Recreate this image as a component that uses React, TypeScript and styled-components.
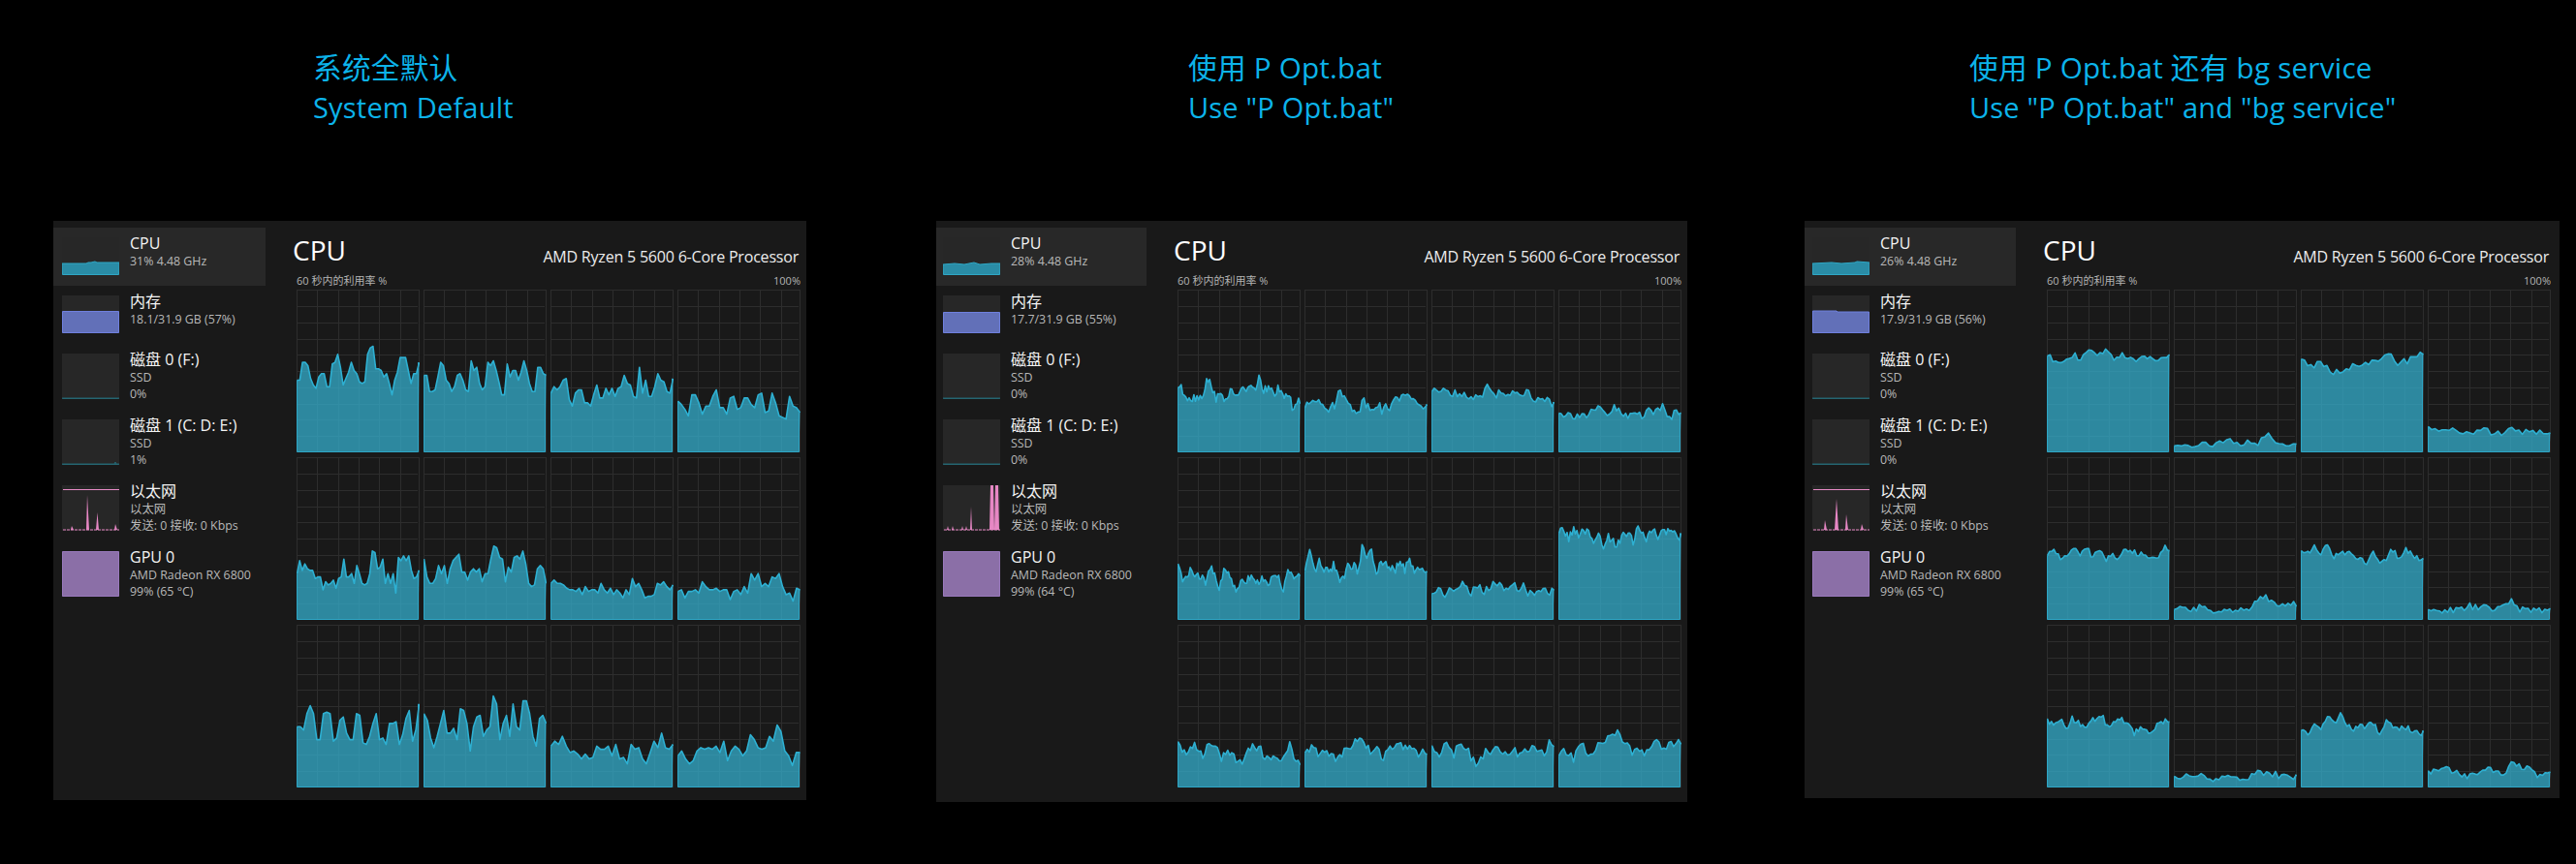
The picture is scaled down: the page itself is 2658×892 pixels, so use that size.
import React from "react";
import styled, { createGlobalStyle } from "styled-components";

const SANS = `"Open Sans", "Noto Sans CJK SC", sans-serif`;

const cpuSets: number[][][] = [
  [
    [44,44,55,55,53,45,41,39,46,48,48,40,40,54,55,60,52,41,45,49,55,50,48,43,42,43,60,64,65,51,51,50,46,48,42,35,44,49,58,58,58,50,42,48,48,55],
    [47,47,37,37,38,46,55,53,44,42,37,40,47,48,44,38,37,56,50,52,42,38,40,55,53,56,50,43,35,35,54,46,50,50,44,49,56,50,42,37,37,52,52,48,47],
    [36,40,38,40,44,45,32,28,36,38,38,30,30,28,35,41,33,33,39,35,39,34,39,40,47,42,41,34,33,52,36,44,34,34,40,48,44,43,37,36,45],
    [31,29,26,22,35,35,30,23,28,28,34,38,27,27,23,33,34,26,27,33,33,29,27,35,36,24,25,36,30,22,21,20,34,28,27,24],
    [28,36,30,34,31,30,30,25,26,26,18,23,21,22,24,19,25,26,37,26,26,28,22,33,28,22,21,22,28,42,41,31,32,37,22,28,22,28,16,38,36,39,36,39,30,25,26,30],
    [37,26,22,22,25,33,28,33,22,31,36,38,40,29,29,24,29,31,29,31,23,28,28,37,45,44,38,37,23,32,29,38,39,37,42,34,22,20,21,31,33,31,22],
    [22,24,22,22,21,19,18,18,17,19,15,20,17,18,18,16,22,18,16,19,15,18,16,13,18,15,25,20,22,18,13,14,14,15,22,21,23,20,18,21],
    [17,18,13,17,17,18,16,23,20,18,18,19,17,18,18,12,17,18,15,20,16,28,24,28,20,22,20,26,25,28,20,15,16,11,19,18],
    [37,37,35,45,50,45,29,29,45,46,45,28,30,41,43,33,29,29,45,44,27,26,31,39,45,29,30,26,39,39,40,26,32,42,47,28,35,51],
    [45,41,30,24,31,39,47,33,33,36,29,48,47,39,22,37,43,44,31,35,37,56,51,29,39,44,31,51,37,35,53,53,45,31,25,42,44,39],
    [25,28,26,31,25,21,22,20,17,20,17,18,25,23,23,25,19,26,17,18,14,26,23,24,17,14,21,28,24,33,24,23,26],
    [19,22,17,14,16,22,24,23,24,23,25,21,28,16,22,25,23,19,22,32,29,24,23,24,31,28,38,34,22,19,13,21,21],
  ],
  [
    [41,37,34,33,34,34,43,42,33,34,33,36,35,37,38,40,37,46,37,39,36,38,33,36,28,30],
    [26,31,33,31,26,28,40,30,27,25,32,26,30,26,27,30,34,37,30,30,28],
    [37,36,40,34,38,34,35,33,41,34,39,33,36,36,39,30,34,30],
    [26,22,23,23,22,24,26,22,27,23,21,24,22,28,23,28,21,25],
    [35,24,26,31,25,27,21,32,29,18,29,29,21,18,25,24,28,22,24,26,22,25,27,18,29,26,26],
    [29,40,29,35,29,29,34,25,25,34,33,30,43,39,41,29,34,33,31,30,35,31,36,28,33,27],
    [16,19,16,17,19,23,16,19,17,20,22,17,20,20,20,15,18,17,17],
    [53,56,49,57,50,54,54,44,53,42,50,47,47,51,55,47,58,51,50,55,49,55,54,55,51],
    [30,21,25,25,19,28,27,17,20,18,14,22,25,25,18,18,19,17,25,15],
    [19,26,19,22,21,16,22,25,30,27,21,23,18,26,24,25,25,20,21],
    [23,21,29,20,29,21,14,20,22,23,19,23,19,21,24,20,26],
    [20,21,17,29,16,25,26,33,33,26,22,24,21,27,25,25,29],
  ],
  [
    [59,56,57,60,57,61,60,62,58,60,58,56,58,56,60],
    [3,5,4,5,4,7,5,5,5,12,5,3],
    [58,52,56,50,48,52,53,54,55,60,55,56,60],
    [15,12,13,13,12,13,12,11,15,12,11,12],
    [39,43,38,39,43,40,43,39,43,36,40,38,43,41,40,39,40,38,44],
    [6,6,6,7,6,5,6,6,5,6,11,14,10,10,9],
    [43,42,44,40,46,38,40,42,38,39,34,41,36,38,43,36,44,39,38],
    [4,5,6,5,6,8,7,7,6,7,12,6,6,5,5],
    [41,37,42,36,42,40,36,41,41,42,36,41,42,39,33,37,34,33,41,40],
    [6,6,6,7,4,5,6,6,5,8,8,8,6,6],
    [35,33,37,35,45,39,44,37,35,38,37,39,33,40,36,35,37,33,33],
    [10,9,11,10,8,6,7,11,10,9,9,16,11,11,7,7],
  ],
];

// the later captures were traced coarser, so add back some of the sample noise
const roughen = (values: number[], seed: number, amp: number) => {
  const out: number[] = [];
  values.forEach((v, i) => {
    const next = values[i + 1] ?? v;
    for (let k = 0; k < 3; k++) {
      const n = Math.sin((i * 3 + k + 1) * 12.9898 + seed * 78.233) * 43758.5453;
      const noise = (n - Math.floor(n) - 0.5) * amp;
      out.push(Math.max(1, v + ((next - v) * k) / 3 + noise));
    }
  });
  return out;
};

const GlobalStyle = createGlobalStyle`
  html, body {
    margin: 0;
    background: #000;
  }
  body {
    width: 2658px;
    height: 892px;
    overflow: hidden;
    font-family: ${SANS};
  }
`;

const Page = styled.div`
  display: flex;
  align-items: flex-start;
  padding-left: 55px;
`;

const Column = styled.section<{ $width: number; $gap: number }>`
  width: ${(p) => p.$width}px;
  margin-left: ${(p) => p.$gap}px;
  flex: none;
`;

const Heading = styled.div<{ $indent: number }>`
  height: 228px;
  box-sizing: border-box;
  padding: 49px 0 0 ${(p) => p.$indent}px;
  color: #0cb3ea;
  line-height: 41px;
  letter-spacing: 0.2px;
  white-space: nowrap;
`;

const HeadingCn = styled.div`
  font-size: 29.7px;
`;

const HeadingEn = styled.div`
  font-size: 29px;
`;

const Window = styled.div<{ $height: number }>`
  display: flex;
  height: ${(p) => p.$height}px;
  padding-top: 7px;
  box-sizing: border-box;
  background: #191919;
`;

const Sidebar = styled.nav<{ $width: number; $offset: number }>`
  width: ${(p) => p.$width}px;
  flex: none;
  margin-right: ${(p) => p.$offset - p.$width}px;
`;

const Row = styled.div<{ $height: number; $inset: number; $active?: boolean }>`
  display: flex;
  height: ${(p) => p.$height}px;
  box-sizing: border-box;
  padding: 10px 0 0 ${(p) => p.$inset}px;
  background: ${(p) => (p.$active ? "#282828" : "transparent")};
`;

const Thumb = styled.svg`
  display: block;
  flex: none;
  background: #272727;
`;

const RowText = styled.div`
  margin: -5px 0 0 11px;
  white-space: nowrap;
`;

const RowTitle = styled.div`
  color: #f4f4f4;
  font-size: 16px;
  line-height: 22px;
  height: 21px;
`;

const RowSub = styled.div`
  color: #b8b8b8;
  font-size: 12.4px;
  line-height: 17px;
`;

const Main = styled.main`
  width: 520px;
  flex: none;
`;

const Header = styled.header`
  display: flex;
  justify-content: space-between;
  align-items: flex-end;
  height: 42px;
  margin-left: -4px;
  padding-right: 2px;
`;

const BigTitle = styled.h1`
  margin: 0;
  color: #fff;
  font-size: 28px;
  font-weight: 400;
  line-height: 38px;
`;

const Cpu = styled.div`
  color: #ececec;
  font-size: 16px;
  letter-spacing: -0.2px;
  line-height: 24px;
`;

const Scale = styled.div`
  display: flex;
  justify-content: space-between;
  height: 16px;
  margin-top: 5px;
  margin-bottom: 1px;
  color: #b4b4b4;
  font-size: 11px;
  line-height: 16px;
`;

const Charts = styled.div`
  display: grid;
  grid-template-columns: repeat(4, 127px);
  grid-auto-rows: 168px;
  gap: 5px 4px;
`;

const ChartBox = styled.svg`
  display: block;
  width: 127px;
  height: 168px;
`;

const CoreChart = ({ values }: { values: number[] }) => {
  const w = 127;
  const h = 168;
  const pts = values.map((v, i) => {
    const x = 0.5 + (i / (values.length - 1)) * (w - 1);
    const y = h - 1 - (v / 100) * (h - 1);
    return `${x.toFixed(1)},${y.toFixed(1)}`;
  });
  const vs = [21, 43, 64, 85, 107];
  const hs = [17, 34, 51, 67, 84, 101, 118, 134, 151];
  return (
    <ChartBox viewBox={`0 0 ${w} ${h}`}>
      <rect x={0.5} y={0.5} width={w - 1} height={h - 1} fill="none" stroke="#2d2d2d" />
      {vs.map((x) => (
        <line key={x} x1={x + 0.5} x2={x + 0.5} y1={0} y2={h} stroke="#2d2d2d" />
      ))}
      {hs.map((y) => (
        <line key={y} x1={0} x2={w - 2} y1={y + 0.5} y2={y + 0.5} stroke="#2d2d2d" />
      ))}
      <polygon
        points={`0.5,${h - 0.5} ${pts.join(" ")} ${w - 1.5},${h - 0.5}`}
        fill="#35b3d3"
        fillOpacity={0.72}
      />
      <polyline points={pts.join(" ")} fill="none" stroke="#2eb0d2" strokeWidth={1.6} strokeLinejoin="round" />
      <path d={`M0.5 ${pts[0].split(",")[1]}V${h - 0.5}H${w - 1.5}V${pts[pts.length - 1].split(",")[1]}`} fill="none" stroke="#2ea6c6" />
    </ChartBox>
  );
};

const Spark = ({
  w,
  h,
  fill,
  stroke,
  points,
}: {
  w: number;
  h: number;
  fill: string;
  stroke: string;
  points: string;
}) => (
  <Thumb width={w} height={h} viewBox={`0 0 ${w} ${h}`}>
    <polygon points={`0.5,${h - 0.5} ${points} ${w - 0.5},${h - 0.5}`} fill={fill} stroke={stroke} />
  </Thumb>
);

type Side = {
  cpu: string;
  cpuLine: string;
  mem: string;
  memLine: string;
  disk1: string;
  net: string;
  netCap: boolean;
  gpu: string;
};

const DiskLine = ({ bump }: { bump?: boolean }) => (
  <Spark
    w={59}
    h={47}
    fill="#1f5560"
    stroke="#256571"
    points={bump ? "0,46 54,46 55,44 56,46 59,46" : "0,46 59,46"}
  />
);

const SideList = ({ width, offset, data }: { width: number; offset: number; data: Side }) => {
  const inset = width - 210;
  return (
    <Sidebar $width={width} $offset={offset}>
      <Row $height={60} $inset={inset} $active>
        <Spark w={59} h={39} fill="#2a8ca6" stroke="#2ea8c6" points={data.cpuLine} />
        <RowText>
          <RowTitle>CPU</RowTitle>
          <RowSub>{data.cpu}</RowSub>
        </RowText>
      </Row>
      <Row $height={60} $inset={inset}>
        <Spark w={59} h={39} fill="#6270b8" stroke="#6f80de" points={data.memLine} />
        <RowText>
          <RowTitle>内存</RowTitle>
          <RowSub>{data.mem}</RowSub>
        </RowText>
      </Row>
      <Row $height={68} $inset={inset}>
        <DiskLine />
        <RowText>
          <RowTitle>磁盘 0 (F:)</RowTitle>
          <RowSub>SSD</RowSub>
          <RowSub>0%</RowSub>
        </RowText>
      </Row>
      <Row $height={68} $inset={inset}>
        <DiskLine bump={data.disk1 === "1%"} />
        <RowText>
          <RowTitle>磁盘 1 (C: D: E:)</RowTitle>
          <RowSub>SSD</RowSub>
          <RowSub>{data.disk1}</RowSub>
        </RowText>
      </Row>
      <Row $height={68} $inset={inset}>
        <Thumb width={59} height={47} viewBox="0 0 59 47">
          <polygon points={data.net} fill="#e687c4" />
          <line x1={1} x2={59} y1={46} y2={46} stroke="#e687c4" strokeDasharray="3 1" />
          {data.netCap && <line x1={1} x2={59} y1={4.5} y2={4.5} stroke="#e88bc6" />}
        </Thumb>
        <RowText>
          <RowTitle>以太网</RowTitle>
          <RowSub>以太网</RowSub>
          <RowSub>发送: 0 接收: 0 Kbps</RowSub>
        </RowText>
      </Row>
      <Row $height={68} $inset={inset}>
        <Spark w={59} h={47} fill="#8b6fa7" stroke="#9a79bd" points="0.5,0.5 58.5,0.5" />
        <RowText>
          <RowTitle>GPU 0</RowTitle>
          <RowSub>AMD Radeon RX 6800</RowSub>
          <RowSub>{data.gpu}</RowSub>
        </RowText>
      </Row>
    </Sidebar>
  );
};

const columns = [
  {
    width: 777,
    gap: 0,
    indent: 268,
    height: 598,
    sideWidth: 219,
    offset: 251,
    cn: "系统全默认",
    en: "System Default",
    side: {
      cpu: "31% 4.48 GHz",
      cpuLine: "0,27 25,27 27,26 30,26 34,25 36,26 59,26",
      mem: "18.1/31.9 GB (57%)",
      memLine: "0.5,16.5 58.5,16.5",
      disk1: "1%",
      net: "0,46 9,46 10,42 12,46 25,46 26,10 28,46 35,46 36.5,28 38,46 54,46 55,40 57,46 59,46",
      netCap: true,
      gpu: "99% (65 °C)",
    },
    amp: 0,
  },
  {
    width: 775,
    gap: 134,
    indent: 260,
    height: 600,
    sideWidth: 217,
    offset: 249,
    cn: "使用 P Opt.bat",
    en: `Use "P Opt.bat"`,
    side: {
      cpu: "28% 4.48 GHz",
      cpuLine: "0,28 12,27 22,28 32,26 38,28 50,27 59,27",
      mem: "17.7/31.9 GB (55%)",
      memLine: "0.5,17.5 58.5,17.5",
      disk1: "0%",
      net: "0,46 4,46 5,42 6,46 9,46 10,42 11,46 19,46 20,42 21,46 23,46 24,42 25,46 28,46 29,22 30,46 48,46 49,0 52,0 53,46 54,0 57,0 58,46 59,46",
      netCap: false,
      gpu: "99% (64 °C)",
    },
    amp: 6,
  },
  {
    width: 779,
    gap: 121,
    indent: 170,
    height: 596,
    sideWidth: 218,
    offset: 250,
    cn: "使用 P Opt.bat 还有 bg service",
    en: `Use "P Opt.bat" and "bg service"`,
    side: {
      cpu: "26% 4.48 GHz",
      cpuLine: "0,27 20,26 30,27 44,26 46,25 59,26",
      mem: "17.9/31.9 GB (56%)",
      memLine: "0.5,16 25,16 26,17 58.5,17",
      disk1: "0%",
      net: "0,46 12,46 13,36 15,46 23,46 25,14 27,46 34,46 35,30 37,46 50,46 51,40 53,46 59,46",
      netCap: true,
      gpu: "99% (65 °C)",
    },
    amp: 4,
  },
];

const App: React.FC = () => {
  return (
    <>
      <GlobalStyle />
      <Page>
        {columns.map((col, c) => (
          <Column key={col.indent} $width={col.width} $gap={col.gap}>
            <Heading $indent={col.indent}>
              <HeadingCn>{col.cn}</HeadingCn>
              <HeadingEn>{col.en}</HeadingEn>
            </Heading>
            <Window $height={col.height}>
              <SideList width={col.sideWidth} offset={col.offset} data={col.side} />
              <Main>
                <Header>
                  <BigTitle>CPU</BigTitle>
                  <Cpu>AMD Ryzen 5 5600 6-Core Processor</Cpu>
                </Header>
                <Scale>
                  <span>60 秒内的利用率 %</span>
                  <span>100%</span>
                </Scale>
                <Charts>
                  {cpuSets[c].map((values, i) => (
                    <CoreChart key={i} values={col.amp ? roughen(values, c * 12 + i, col.amp) : values} />
                  ))}
                </Charts>
              </Main>
            </Window>
          </Column>
        ))}
      </Page>
    </>
  );
};

export default App;
